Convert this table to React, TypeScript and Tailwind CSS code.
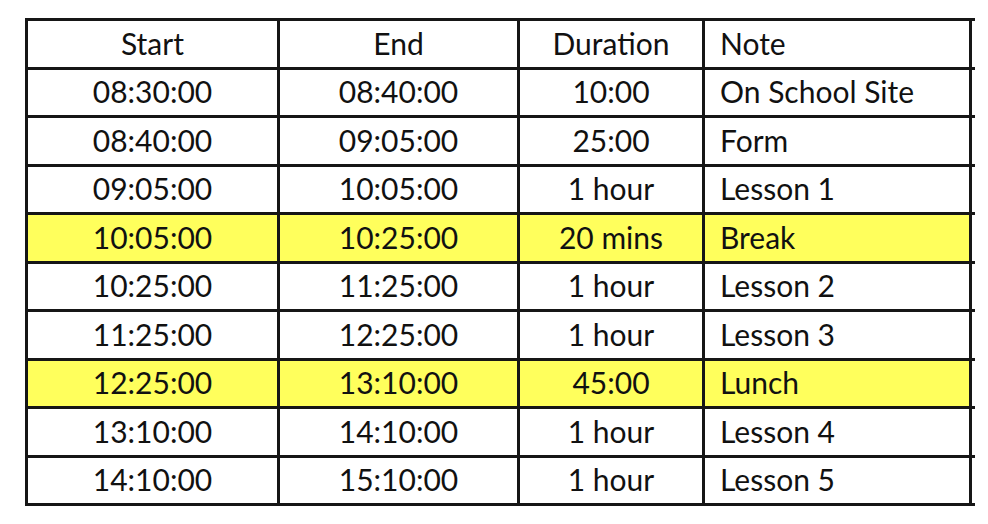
const rows = [
  { start: "08:30:00", end: "08:40:00", duration: "10:00", note: "On School Site" },
  { start: "08:40:00", end: "09:05:00", duration: "25:00", note: "Form" },
  { start: "09:05:00", end: "10:05:00", duration: "1 hour", note: "Lesson 1" },
  { start: "10:05:00", end: "10:25:00", duration: "20 mins", note: "Break", highlight: true },
  { start: "10:25:00", end: "11:25:00", duration: "1 hour", note: "Lesson 2" },
  { start: "11:25:00", end: "12:25:00", duration: "1 hour", note: "Lesson 3" },
  { start: "12:25:00", end: "13:10:00", duration: "45:00", note: "Lunch", highlight: true },
  { start: "13:10:00", end: "14:10:00", duration: "1 hour", note: "Lesson 4" },
  { start: "14:10:00", end: "15:10:00", duration: "1 hour", note: "Lesson 5" },
];

const cell = "h-[48.5px] flex items-center pb-[2px] border-r-[3px] border-b-[3px] border-[#161616]";

const Row = ({
  start,
  end,
  duration,
  note,
  highlight,
}: {
  start: string;
  end: string;
  duration: string;
  note: string;
  highlight?: boolean;
}) => {
  const bg = highlight ? "bg-[#ffff5c]" : "bg-white";
  return (
    <div className="flex">
      <div className={`${cell} ${bg} w-[252px] justify-center`}>{start}</div>
      <div className={`${cell} ${bg} w-[240px] justify-center`}>{end}</div>
      <div className={`${cell} ${bg} w-[185px] justify-center`}>{duration}</div>
      <div className={`${cell} ${bg} w-[267px] pl-[15px]`}>{note}</div>
      <div className="h-[48.5px] w-[3px] border-b-[3px] border-[#161616]" />
    </div>
  );
};

export default function App() {
  return (
    <div className="w-[988px] h-[524px] bg-white pt-[18px] pl-[25px]">
      {/* timetable */}
      <div
        className="w-fit border-t-[3px] border-l-[3px] border-[#161616] text-[30px] leading-none text-[#111]"
        style={{ fontFamily: "Lato, 'Open Sans', sans-serif" }}
      >
        <div className="flex">
          <div className={`${cell} w-[252px] justify-center`}>Start</div>
          <div className={`${cell} w-[240px] justify-center`}>End</div>
          <div className={`${cell} w-[185px] justify-center`}>Duration</div>
          <div className={`${cell} w-[267px] pl-[15px]`}>Note</div>
          <div className="h-[48.5px] w-[3px] border-b-[3px] border-[#161616]" />
        </div>
        {rows.map((r, i) => (
          <Row key={i} {...r} />
        ))}
      </div>
    </div>
  );
}
